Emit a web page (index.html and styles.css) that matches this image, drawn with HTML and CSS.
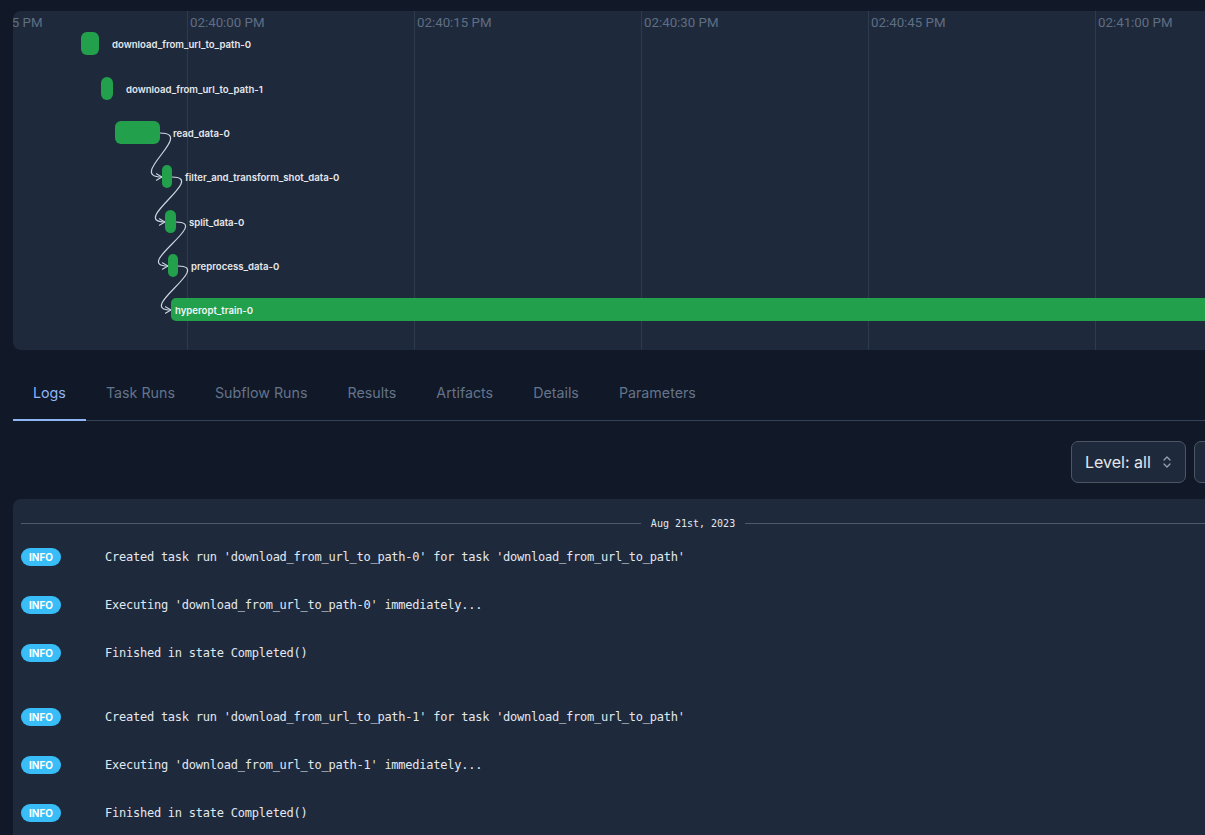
FILE: index.html
```html
<!DOCTYPE html>
<html lang="en">
<head>
<meta charset="utf-8">
<title>Flow run</title>
<link rel="stylesheet" href="styles.css">
</head>
<body>
<main class="page">
  <section class="timeline">
    <div class="tick" style="left:-48px"><span>02:39:45 PM</span></div>
    <div class="tick" style="left:174px"><span>02:40:00 PM</span></div>
    <div class="tick" style="left:401px"><span>02:40:15 PM</span></div>
    <div class="tick" style="left:628px"><span>02:40:30 PM</span></div>
    <div class="tick" style="left:855px"><span>02:40:45 PM</span></div>
    <div class="tick" style="left:1082px"><span>02:41:00 PM</span></div>

    <svg class="edges" width="1360" height="339" viewBox="0 0 1360 339">
      <defs>
        <marker id="arrow" viewBox="0 0 10 10" refX="9" refY="5" markerWidth="8" markerHeight="8" markerUnits="userSpaceOnUse" orient="auto">
          <path d="M2 1 L9 5 L2 9" fill="none" stroke="#cbd5e1" stroke-width="1.3" stroke-linecap="round" stroke-linejoin="round"/>
        </marker>
      </defs>
      <path class="edge" d="M147 122 C183 122, 113 166, 149 166" marker-end="url(#arrow)"/>
      <path class="edge" d="M159 166 C195 166, 116 211, 152 211" marker-end="url(#arrow)"/>
      <path class="edge" d="M163 211 C199 211, 119 255, 155 255" marker-end="url(#arrow)"/>
      <path class="edge" d="M165 255 C201 255, 122 299, 158 299" marker-end="url(#arrow)"/>
    </svg>

    <div class="node" style="left:68px;top:21px"><div class="bar" style="width:18px"></div><span class="node-label">download_from_url_to_path-0</span></div>
    <div class="node" style="left:88px;top:66px"><div class="bar" style="width:12px"></div><span class="node-label">download_from_url_to_path-1</span></div>
    <div class="node" style="left:102px;top:110px"><div class="bar" style="width:45px"></div><span class="node-label">read_data-0</span></div>
    <div class="node" style="left:149px;top:154px"><div class="bar" style="width:10px"></div><span class="node-label">filter_and_transform_shot_data-0</span></div>
    <div class="node" style="left:152px;top:199px"><div class="bar" style="width:11px"></div><span class="node-label">split_data-0</span></div>
    <div class="node" style="left:155px;top:243px"><div class="bar" style="width:10px"></div><span class="node-label">preprocess_data-0</span></div>
    <div class="node" style="left:158px;top:287px"><div class="bar bar--wide" style="width:1300px"><span class="node-label node-label--inside">hyperopt_train-0</span></div></div>
  </section>

  <nav class="tabs">
    <a class="tab tab--active">Logs</a>
    <a class="tab">Task Runs</a>
    <a class="tab">Subflow Runs</a>
    <a class="tab">Results</a>
    <a class="tab">Artifacts</a>
    <a class="tab">Details</a>
    <a class="tab">Parameters</a>
  </nav>

  <div class="toolbar">
    <div class="select">
      <span>Level: all</span>
      <svg class="select-icon" width="10" height="14" viewBox="0 0 10 14"><path d="M2 5 L5 2 L8 5 M2 9 L5 12 L8 9" fill="none" stroke="#94a3b8" stroke-width="1.3" stroke-linecap="round" stroke-linejoin="round"/></svg>
    </div>
    <div class="select select--wide"><span>Newest to oldest</span></div>
  </div>

  <section class="logs">
    <div class="divider"><span class="divider-line"></span><span class="divider-text">Aug 21st, 2023</span><span class="divider-line"></span></div>
    <div class="log-group log-group--first">
      <div class="log-row"><span class="badge">INFO</span><span class="message">Created task run 'download_from_url_to_path-0' for task 'download_from_url_to_path'</span></div>
      <div class="log-row"><span class="badge">INFO</span><span class="message">Executing 'download_from_url_to_path-0' immediately...</span></div>
      <div class="log-row"><span class="badge">INFO</span><span class="message">Finished in state Completed()</span></div>
    </div>
    <div class="log-group">
      <div class="log-row"><span class="badge">INFO</span><span class="message">Created task run 'download_from_url_to_path-1' for task 'download_from_url_to_path'</span></div>
      <div class="log-row"><span class="badge">INFO</span><span class="message">Executing 'download_from_url_to_path-1' immediately...</span></div>
      <div class="log-row"><span class="badge">INFO</span><span class="message">Finished in state Completed()</span></div>
    </div>
  </section>
</main>
</body>
</html>
```
FILE: styles.css
```css
* { box-sizing: border-box; }

html, body {
  margin: 0;
  background: #111827;
  overflow: hidden;
  height: 100%;
}

body {
  font-family: Inter, "Noto Sans", sans-serif;
  color: #e2e8f0;
}

.page {
  width: 1373px;
  padding: 11px 0 0 13px;
}

/* ---------- timeline ---------- */
.timeline {
  position: relative;
  height: 339px;
  background: #1e293b;
  border-radius: 8px;
  overflow: hidden;
}

.tick {
  position: absolute;
  top: 0;
  bottom: 0;
  border-left: 1px solid #2e3a4d;
}

.tick span {
  display: block;
  padding-left: 2px;
  margin-top: 4px;
  font-family: Roboto, "Liberation Sans", sans-serif;
  font-size: 13.3px;
  line-height: 15px;
  color: #5f6e83;
  white-space: nowrap;
}

.edges {
  position: absolute;
  left: 0;
  top: 0;
  pointer-events: none;
}

.edge {
  fill: none;
  stroke: #cbd5e1;
  stroke-width: 1.2;
}

.node {
  position: absolute;
  display: flex;
  align-items: center;
  height: 23px;
}

.bar {
  height: 23px;
  background: #22a04c;
  border-radius: 6px;
  flex: none;
}

.bar--wide {
  display: flex;
  align-items: center;
  border-radius: 5px 0 0 5px;
}

.node-label {
  margin-left: 13px;
  padding-top: 1px;
  font-size: 9.6px;
  font-weight: 600;
  color: #e5e7eb;
  white-space: nowrap;
}

.node-label--inside {
  margin-left: 4px;
  color: #f1f5f9;
}

/* ---------- tabs ---------- */
.tabs {
  display: flex;
  margin-top: 15px;
  border-bottom: 1px solid #334155;
}

.tab {
  display: flex;
  align-items: center;
  height: 56px;
  padding: 0 20px;
  margin-bottom: -1px;
  border-bottom: 2px solid transparent;
  font-size: 14.25px;
  color: #64748b;
  cursor: pointer;
}

.tab--active {
  color: #8fb5f7;
  border-bottom-color: #8fb5f7;
}

/* ---------- toolbar ---------- */
.toolbar {
  display: flex;
  justify-content: flex-end;
  gap: 8px;
  margin-top: 20px;
}

.select {
  display: flex;
  align-items: center;
  justify-content: space-between;
  width: 115px;
  height: 42px;
  padding: 0 13px;
  border: 1px solid #4b5563;
  border-radius: 7px;
  background: #1e293b;
  font-size: 16px;
  color: #e5e7eb;
  white-space: nowrap;
  overflow: hidden;
}

.select--wide {
  width: 179px;
}

.select-icon {
  flex: none;
}

/* ---------- logs ---------- */
.logs {
  margin-top: 16px;
  height: 400px;
  padding: 16px 8px 0 8px;
  background: #1e293b;
  border-radius: 8px 8px 0 0;
}

.divider {
  display: flex;
  align-items: center;
  gap: 10px;
  height: 16px;
}

.divider-line {
  flex: 1;
  height: 1px;
  background: #4b5a6f;
}

.divider-text {
  font-family: "DejaVu Sans Mono", "Liberation Mono", monospace;
  font-size: 10px;
  color: #e2e8f0;
}

.log-group {
  margin-bottom: 16px;
}

.log-group--first {
  margin-top: 2px;
}

.log-row {
  display: flex;
  align-items: center;
  height: 48px;
}

.badge {
  display: flex;
  align-items: center;
  justify-content: center;
  width: 40px;
  height: 18px;
  border-radius: 9px;
  background: #38bdf8;
  color: #ffffff;
  font-size: 10px;
  font-weight: 700;
  flex: none;
}

.message {
  margin-left: 44px;
  font-family: "DejaVu Sans Mono", "Liberation Mono", monospace;
  font-size: 12px;
  letter-spacing: -0.24px;
  color: #e2e8f0;
  white-space: nowrap;
}
```
